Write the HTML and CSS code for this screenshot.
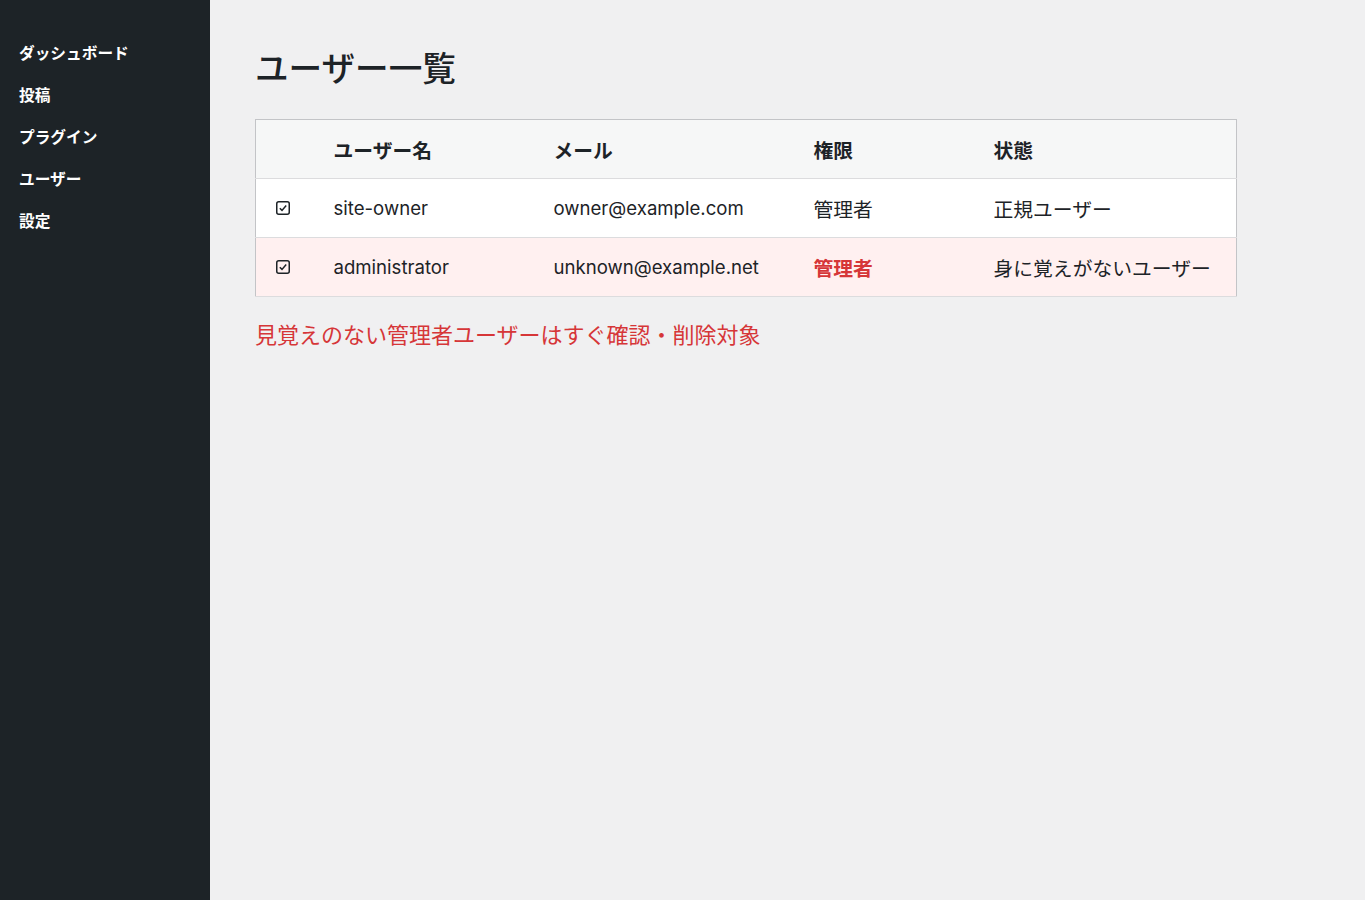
FILE: index.html
```html
<!DOCTYPE html>
<html lang="ja">
<head>
  <meta charset="UTF-8" />
  <meta name="viewport" content="width=device-width, initial-scale=1.0"/>
  <title>ユーザー一覧</title>
  <link rel="stylesheet" href="styles.css">
</head>
<body>

  <!-- Sidebar -->
  <div class="sidebar">
    <a href="#" class="side-link">ダッシュボード</a>
    <a href="#" class="side-link">投稿</a>
    <a href="#" class="side-link">プラグイン</a>
    <a href="#" class="side-link">ユーザー</a>
    <a href="#" class="side-link">設定</a>
  </div>

  <!-- Main -->
  <div class="main">
    <h1 class="page-title">ユーザー一覧</h1>

    <table class="user-table">
      <colgroup>
        <col class="col-check">
        <col class="col-name">
        <col class="col-mail">
        <col class="col-role">
        <col class="col-state">
      </colgroup>
      <thead>
        <tr>
          <th></th>
          <th class="ja">ユーザー名</th>
          <th class="ja">メール</th>
          <th class="ja">権限</th>
          <th class="ja">状態</th>
        </tr>
      </thead>
      <tbody>
        <tr>
          <td><svg class="check" width="14" height="14" viewBox="0 0 14 14"><rect x="0.75" y="0.75" width="12.5" height="12.5" rx="2" fill="none" stroke="#1d2327" stroke-width="1.5"/><path d="M3.8 7.2 L6 9.4 L10.2 4.4" fill="none" stroke="#1d2327" stroke-width="1.5"/></svg></td>
          <td>site-owner</td>
          <td>owner@example.com</td>
          <td class="ja">管理者</td>
          <td class="ja">正規ユーザー</td>
        </tr>
        <tr class="suspect">
          <td><svg class="check" width="14" height="14" viewBox="0 0 14 14"><rect x="0.75" y="0.75" width="12.5" height="12.5" rx="2" fill="none" stroke="#1d2327" stroke-width="1.5"/><path d="M3.8 7.2 L6 9.4 L10.2 4.4" fill="none" stroke="#1d2327" stroke-width="1.5"/></svg></td>
          <td>administrator</td>
          <td>unknown@example.net</td>
          <td class="ja role-alert">管理者</td>
          <td class="ja">身に覚えがないユーザー</td>
        </tr>
      </tbody>
    </table>

    <p class="warning">見覚えのない管理者ユーザーはすぐ確認・削除対象</p>
  </div>

</body>
</html>
```

FILE: styles.css
```css
* {
  box-sizing: border-box;
}

body {
  margin: 0;
  display: flex;
  min-height: 100vh;
  background: #f0f0f1;
  color: #1d2327;
  font-family: Inter, "Noto Sans CJK JP", sans-serif;
}

/* Sidebar */
.sidebar {
  width: 210px;
  flex-shrink: 0;
  background: #1d2327;
  padding: 43px 19px;
  display: flex;
  flex-direction: column;
  gap: 20px;
}

.side-link {
  color: #fff;
  text-decoration: none;
  font-size: 15.7px;
  font-weight: 600;
  line-height: 22px;
}

/* Main */
.main {
  flex: 1;
  padding: 47px 45px;
}

.page-title {
  margin: 0 0 28px;
  font-size: 33.6px;
  font-weight: 500;
  line-height: 44px;
}

.user-table {
  width: 982px;
  table-layout: fixed;
  border-collapse: collapse;
  border: 1px solid #c3c4c7;
  background: #fff;
  font-size: 18.6px;
}

.col-check { width: 58px; }
.col-name { width: 220px; }
.col-mail { width: 260px; }
.col-role { width: 180px; }

.user-table th,
.user-table td {
  height: 59px;
  padding: 0 20px;
  text-align: left;
  vertical-align: middle;
  border-bottom: 1px solid #dcdcde;
}

.user-table th {
  background: #f6f7f7;
  font-weight: 700;
}

.user-table .ja {
  font-size: 19.8px;
}

.check {
  display: block;
}

.suspect td {
  background: #fff0f0;
}

.role-alert {
  color: #d63638;
  font-weight: 700;
}

.warning {
  margin: 23px 0 0;
  color: #d63638;
  font-size: 22px;
  line-height: 30px;
}
```
